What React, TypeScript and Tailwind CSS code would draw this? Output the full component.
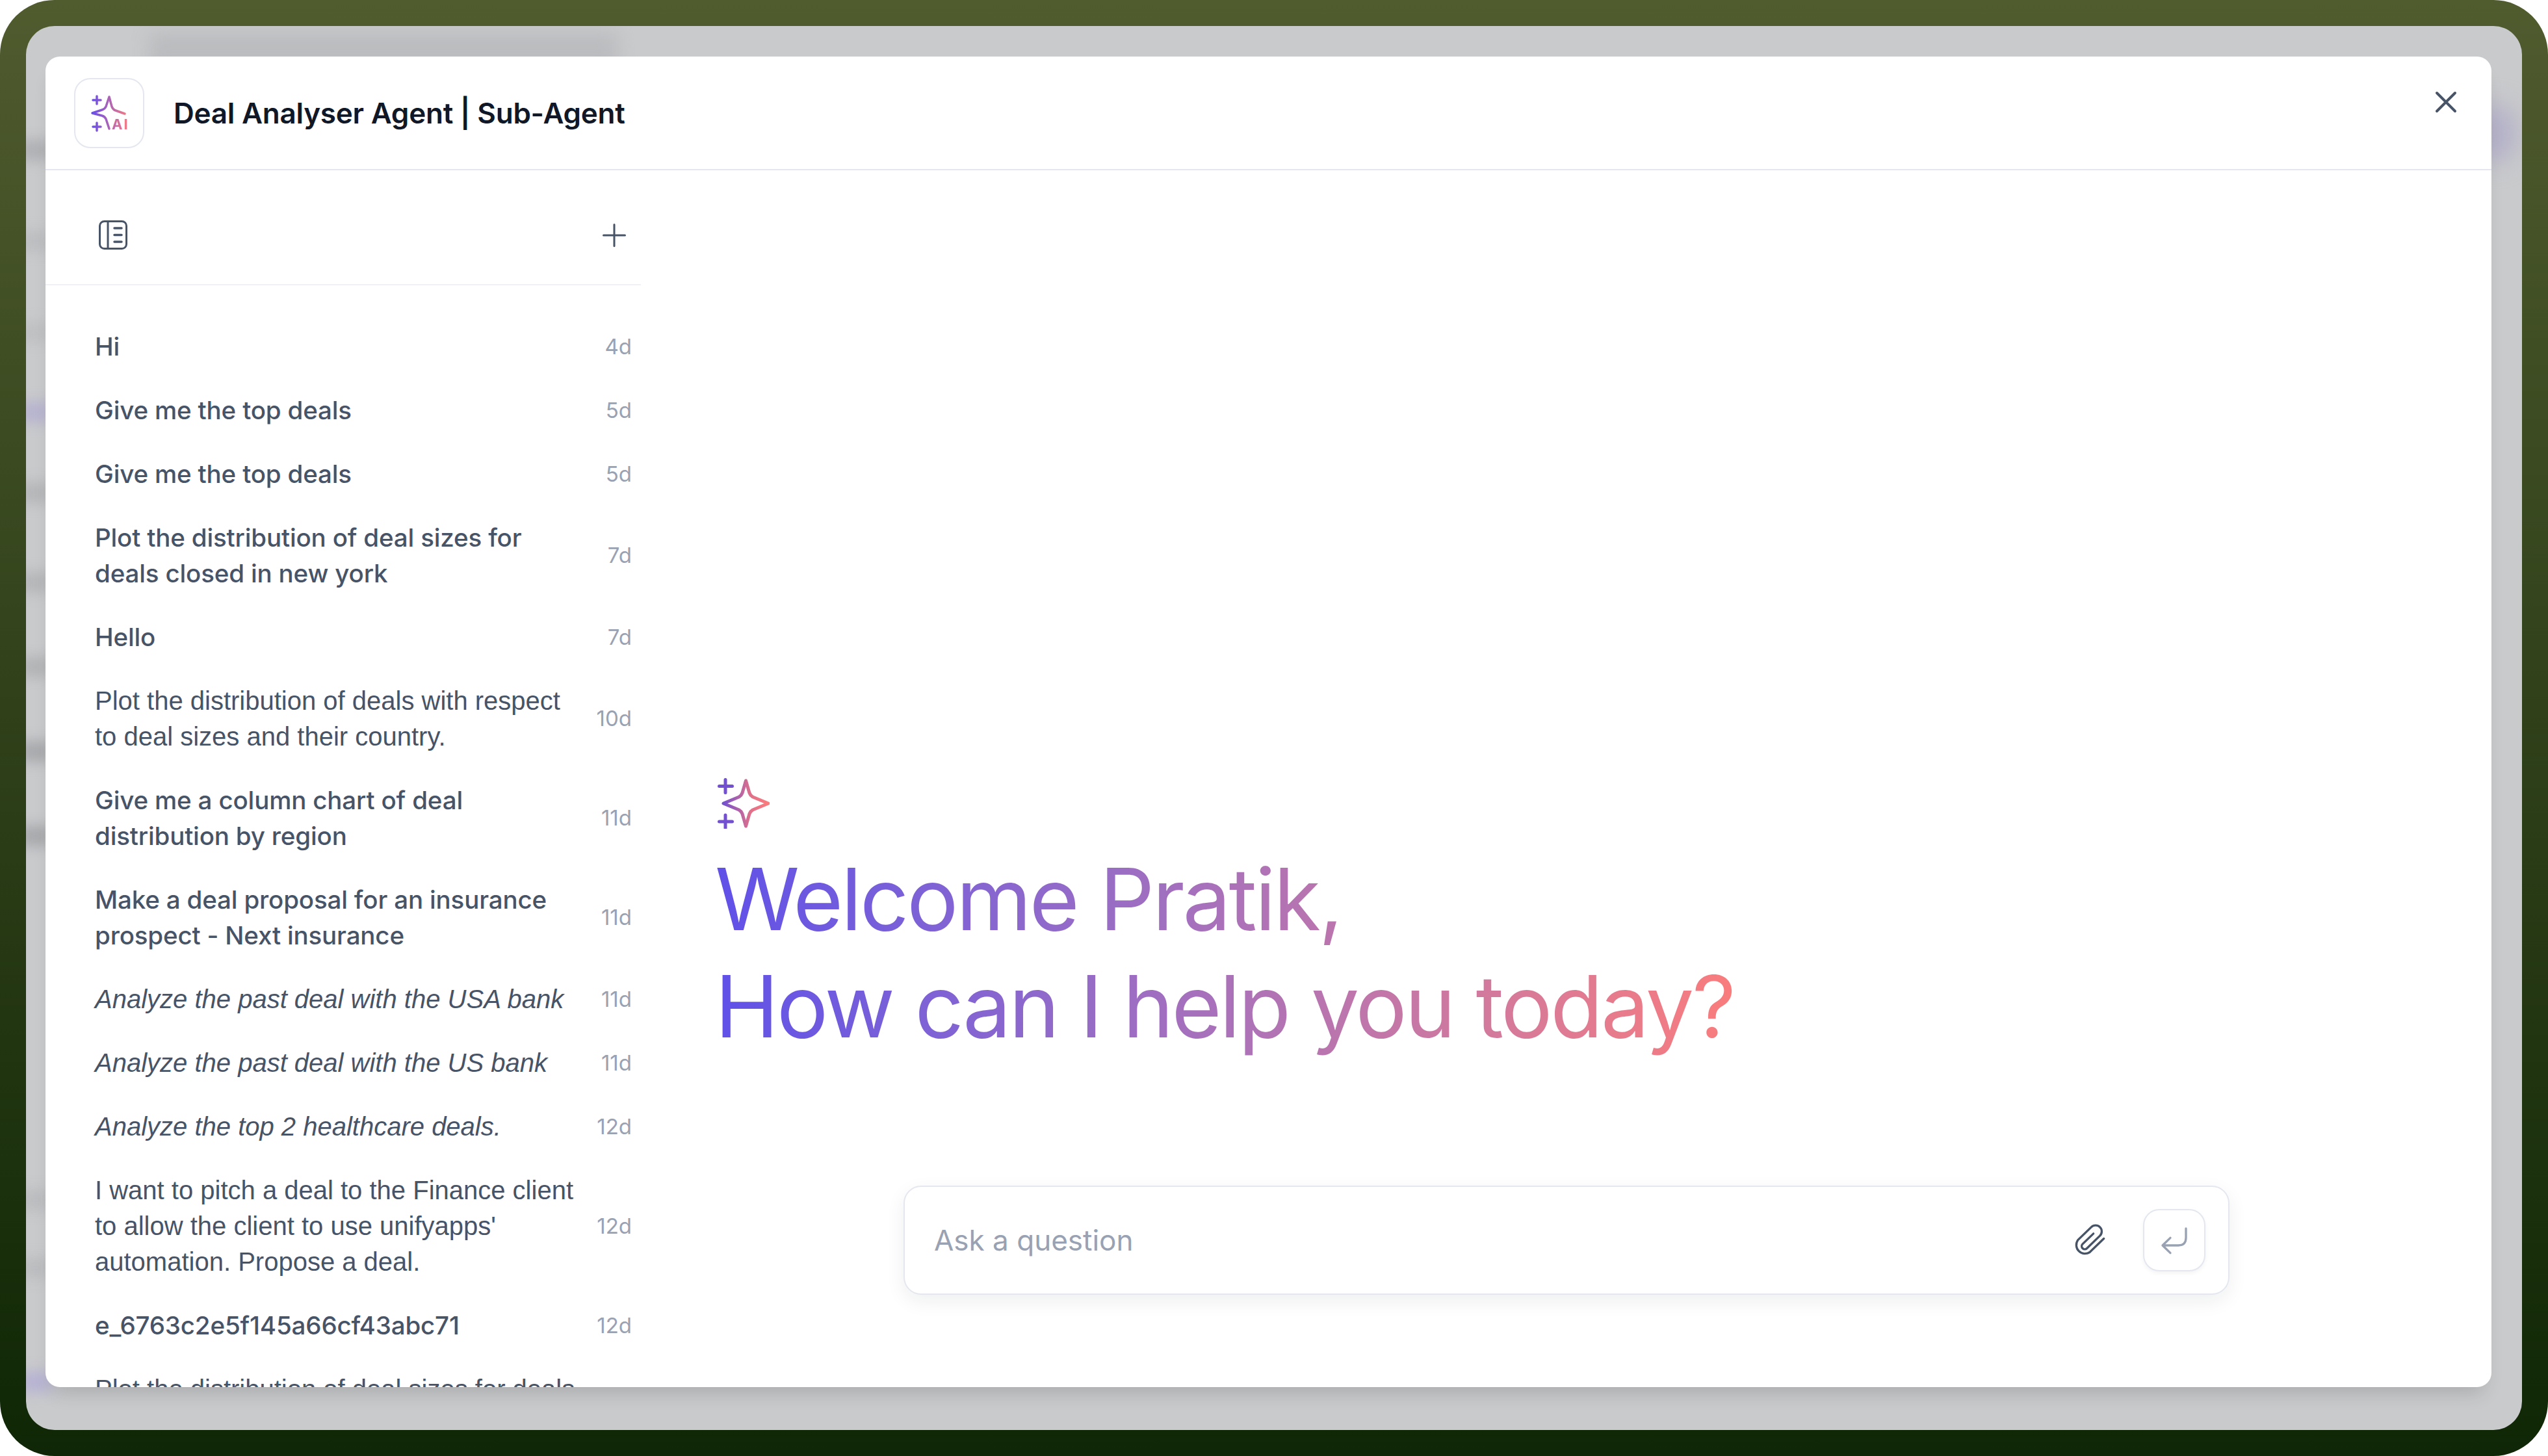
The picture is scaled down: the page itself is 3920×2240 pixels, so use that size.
const chats: { text: string; age: string; italic?: boolean; arial?: boolean }[] = [
  { text: 'Hi', age: '4d' },
  { text: 'Give me the top deals', age: '5d' },
  { text: 'Give me the top deals', age: '5d' },
  { text: 'Plot the distribution of deal sizes for deals closed in new york', age: '7d' },
  { text: 'Hello', age: '7d' },
  { text: 'Plot the distribution of deals with respect to deal sizes and their country.', age: '10d', arial: true },
  { text: 'Give me a column chart of deal distribution by region', age: '11d' },
  { text: 'Make a deal proposal for an insurance prospect - Next insurance', age: '11d' },
  { text: 'Analyze the past deal with the USA bank', age: '11d', italic: true, arial: true },
  { text: 'Analyze the past deal with the US bank', age: '11d', italic: true, arial: true },
  { text: 'Analyze the top 2 healthcare deals.', age: '12d', italic: true, arial: true },
  { text: "I want to pitch a deal to the Finance client to allow the client to use unifyapps' automation. Propose a deal.", age: '12d', arial: true },
  { text: 'e_6763c2e5f145a66cf43abc71', age: '12d' },
  { text: 'Plot the distribution of deal sizes for deals closed in new york', age: '12d', arial: true },
]

// blurred page showing through the overlay, left strip
const leftBands = [
  { top: 215, color: 'rgba(150,152,156,0.5)' },
  { top: 355, color: 'rgba(160,162,165,0.3)' },
  { top: 495, color: 'rgba(160,162,165,0.25)' },
  { top: 618, color: 'rgba(175,170,210,0.7)' },
  { top: 742, color: 'rgba(150,152,156,0.4)' },
  { top: 880, color: 'rgba(150,152,156,0.4)' },
  { top: 1010, color: 'rgba(150,152,156,0.45)' },
  { top: 1140, color: 'rgba(140,142,146,0.55)' },
  { top: 1270, color: 'rgba(140,142,146,0.55)' },
  { top: 1830, color: 'rgba(160,162,165,0.35)' },
  { top: 1935, color: 'rgba(160,162,165,0.35)' },
  { top: 2110, color: 'rgba(178,172,212,0.8)' },
]

function AiLogo() {
  return (
    <svg width="64" height="64" viewBox="0 0 64 64" fill="none">
      <defs>
        <linearGradient id="logoGrad" gradientUnits="userSpaceOnUse" x1="6" y1="30" x2="62" y2="30">
          <stop offset="0" stopColor="#6a4fe8" />
          <stop offset="1" stopColor="#f97c7c" />
        </linearGradient>
      </defs>
      <g stroke="url(#logoGrad)" strokeWidth="3.500" strokeLinecap="round" strokeLinejoin="round">
        <path d="M13 6v12M7 12h12M13 47v12M7 53h12" />
        <path d="M32 56 L27 41 Q25 37 21 36 L6 32 L21 27 Q25 26 27 22 L32 7 L36 22 Q38 27 42 28 L56 33" />
      </g>
      <text x="36" y="57" fontFamily="Inter, sans-serif" fontSize="22" fontWeight="700" letterSpacing="2" fill="url(#logoGrad)">
        AI
      </text>
    </svg>
  )
}

function Sparkle() {
  return (
    <svg className="ml-[4px]" width="80" height="78" viewBox="0 0 80 78" fill="none">
      <defs>
        <linearGradient id="sparkGrad" gradientUnits="userSpaceOnUse" x1="8" y1="39" x2="79" y2="39">
          <stop offset="0" stopColor="#7050d0" />
          <stop offset="0.6" stopColor="#e0708a" />
          <stop offset="1" stopColor="#fb7c7c" />
        </linearGradient>
      </defs>
      <path d="M12 2.500v20M2.500 12.500h20M12 57v20M2.500 67h20" stroke="#7350cf" strokeWidth="5" strokeLinecap="round" />
      <path
        d="M43.500 4 L49 23 Q50.500 27 54 29 L78 39 L54 49 Q50.500 51 49 55 L43.500 74 L38 55 Q36.500 51 33 49 L9 39 L33 29 Q36.500 27 38 23 Z"
        stroke="url(#sparkGrad)"
        strokeWidth="5"
        strokeLinejoin="round"
      />
    </svg>
  )
}

function SidebarIcon() {
  return (
    <svg width="44" height="45" viewBox="0 0 44 45" fill="none" stroke="#475467" strokeWidth="3" strokeLinecap="round">
      <rect x="1.500" y="1.500" width="41" height="42" rx="7" />
      <path d="M14 2v41" />
      <path d="M24 12h11M24 22.500h11M24 33h11" strokeWidth="3.500" />
    </svg>
  )
}

function PaperClip() {
  return (
    <svg width="50" height="52" viewBox="270 275 150 155" fill="none" stroke="#475467" strokeWidth="10" strokeLinecap="round">
      <path d="M 410 345 L 345 408 A 40 40 0 0 1 290 352 L 352 292 A 28 28 0 0 1 392 332 L 332 390 A 14 14 0 0 1 312 370 L 362 322" />
    </svg>
  )
}

function ReturnIcon() {
  return (
    <svg width="45" height="45" viewBox="670 285 135 135" fill="none" stroke="#98a2b3" strokeWidth="10" strokeLinecap="round" strokeLinejoin="round">
      <path d="M790 297 V340 Q790 375 755 375 H682 M718 340 L682 375 L718 410" />
    </svg>
  )
}

export default function App() {
  return (
    <div className="w-[3920px] h-[2240px] bg-white font-['Inter',sans-serif]">
      <div className="w-full h-full p-10 rounded-[84px] bg-gradient-to-b from-[#505b2e] to-[#0f2706]">
        <div className="relative w-full h-full overflow-hidden rounded-[44px] bg-[#c9cacc] pt-[47px] pl-[30px] pr-[47px] pb-[66px]">
          {/* blurred page behind the overlay */}
          <div className="absolute left-[190px] top-[10px] w-[720px] h-[60px] bg-[#a6a7ab] opacity-40 blur-[14px]" />
          <div className="absolute right-[10px] top-[120px] w-[70px] h-[90px] rounded-full bg-[#b3b0c8] blur-[18px]" />
          {leftBands.map(band => (
            <div
              key={band.top}
              className="absolute -left-[10px] w-[50px] h-[32px] blur-[10px]"
              style={{ top: band.top - 40, backgroundColor: band.color }}
            />
          ))}

          <div className="relative flex flex-col h-full overflow-hidden rounded-[22px] bg-white shadow-[0_20px_30px_-12px_rgba(0,0,0,0.16)]">
            <header className="relative flex items-center h-[175px] shrink-0 pl-[44px] border-b-[2.5px] border-[#e4e7ef]">
              <div className="flex items-center justify-center w-[108px] h-[108px] rounded-[25px] border-[2.5px] border-[#e4e7ef]">
                <AiLogo />
              </div>
              <h1 className="ml-[45px] text-[44px] leading-[62px] font-semibold text-[#101828] tracking-[-0.005em]">
                Deal Analyser Agent | Sub-Agent
              </h1>
              <button className="absolute right-[53px] top-[53px]">
                <svg width="34" height="34" viewBox="0 0 34 34" fill="none" stroke="#475467" strokeWidth="4" strokeLinecap="round">
                  <path d="M3 3l28 28M31 3L3 31" />
                </svg>
              </button>
            </header>

            <div className="flex flex-1 min-h-0">
              <aside className="flex flex-col w-[916px] shrink-0">
                <div className="flex items-center justify-between h-[177px] shrink-0 pt-[24px] pl-[82px] pr-[23px] border-b-[2.5px] border-[#f0f1f6]">
                  <SidebarIcon />
                  <svg width="36" height="36" viewBox="0 0 36 36" fill="none" stroke="#475467" strokeWidth="3" strokeLinecap="round">
                    <path d="M18 1.500v33M1.500 18h33" />
                  </svg>
                </div>
                <ul className="flex-1 overflow-hidden pt-[45px] pl-[76px] pr-[14px]">
                  {chats.map((chat, i) => (
                    <li key={i} className="flex items-center justify-between py-[21.500px]">
                      <span
                        className={`w-[746px] leading-[55px] text-[#475467] ${
                          chat.arial ? "text-[40px] font-['Liberation_Sans',sans-serif]" : 'text-[38.500px] font-[450] tracking-[-0.004em]'
                        } ${chat.italic ? 'italic' : ''}`}
                      >
                        {chat.text}
                      </span>
                      <span className="text-[33px] leading-[45px] text-[#98a2b3]">{chat.age}</span>
                    </li>
                  ))}
                </ul>
              </aside>

              <main className="flex flex-col flex-1 justify-end pl-[114px] pb-[142px]">
                <Sparkle />
                <h2 className="w-fit mt-[26px] text-[132px] leading-[165px] tracking-[-0.0235em] text-transparent bg-clip-text bg-gradient-to-r from-[#6050e8] to-[#f97c7c]">
                  Welcome Pratik,
                  <br />
                  How can I help you today?
                </h2>
                <div className="flex items-center self-start w-[2040px] h-[168px] ml-[290px] mt-[193px] pl-[45px] pr-[35px] rounded-[27px] border-[2.5px] border-[#e4e7ef] bg-white shadow-[0_10px_30px_rgba(16,24,40,0.07)]">
                  <span className="flex-1 text-[44px] text-[#98a2b3]">Ask a question</span>
                  <PaperClip />
                  <button className="flex items-center justify-center w-[96px] h-[96px] ml-[57px] rounded-[25px] border-[2.5px] border-[#e4e7ef] bg-white shadow-[0_3px_6px_rgba(16,24,40,0.05)]">
                    <ReturnIcon />
                  </button>
                </div>
              </main>
            </div>
          </div>
        </div>
      </div>
    </div>
  )
}
